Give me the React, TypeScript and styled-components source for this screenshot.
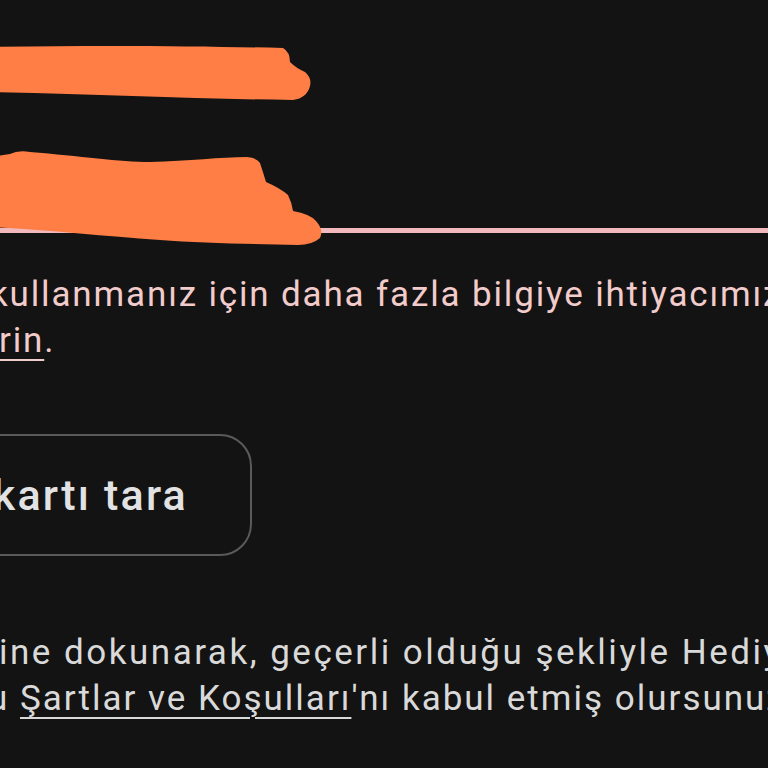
import React from "react";
import styled, { createGlobalStyle } from "styled-components";

const Global = createGlobalStyle`
  html, body {
    margin: 0;
    padding: 0;
    background: #131313;
  }
  body {
    font-family: Roboto, "Noto Sans", Arial, sans-serif;
    overflow: hidden;
  }
`;

const Page = styled.div`
  position: relative;
  width: 768px;
  height: 768px;
  overflow: hidden;
  background: #131313;
  display: flex;
  flex-direction: column;
`;

const Header = styled.div`
  height: 228px;
  flex: none;
`;

const Divider = styled.div`
  height: 5px;
  background: #f1b9be;
  flex: none;
`;

const Scribbles = styled.svg`
  position: absolute;
  top: 0;
  left: 0;
  width: 768px;
  height: 260px;
  pointer-events: none;
`;

const Paragraph = styled.p<{ $color: string; $top: number }>`
  margin: ${(p) => p.$top}px 0 0 0;
  font-size: 35px;
  line-height: 46px;
  color: ${(p) => p.$color};
  white-space: nowrap;
`;

const Line = styled.span<{ $shift: number; $spacing: number }>`
  display: block;
  margin-left: ${(p) => p.$shift}px;
  letter-spacing: ${(p) => p.$spacing}px;
`;

const Link = styled.span`
  text-decoration: underline;
  text-decoration-thickness: 2px;
  text-underline-offset: 7px;
`;

const ButtonRow = styled.div`
  margin-top: 70px;
  margin-left: -60px;
  display: flex;
`;

const OutlineButton = styled.button`
  box-sizing: border-box;
  width: 312px;
  height: 122px;
  border: 2px solid #5a5a5a;
  border-radius: 32px;
  background: transparent;
  color: #e2e2e2;
  font-family: Roboto, "Noto Sans", Arial, sans-serif;
  font-size: 43px;
  font-weight: 500;
  letter-spacing: 2.2px;
  display: flex;
  align-items: center;
  justify-content: flex-end;
  padding: 0 62px 0 0;
  white-space: nowrap;
`;

export default function App() {
  return (
    <>
      <Global />
      <Page>
        <Header />
        <Divider />
        <Scribbles viewBox="0 0 768 260">
          <path
            fill="#fe7e45"
            d="M -10 47 C 100 45, 200 46, 283 48 Q 290 52 290 62 Q 296 68 305 72 Q 312 78 310 86 Q 307 98 293 100 C 200 99, 100 94, -10 92 Z"
          />
          <path
            fill="#fe7e45"
            d="M -10 157 L 10 154 Q 18 150 30 152 C 80 156, 120 162, 150 162 C 190 161, 220 157, 247 157 Q 257 158 260 163 Q 263 172 266 182 Q 280 188 288 195 Q 292 203 293 211 Q 310 214 316 221 Q 324 230 320 238 Q 312 245 298 245 C 250 244, 200 243, 160 240 C 100 236, 50 230, -10 227 Z"
          />
        </Scribbles>
        <Paragraph $color="#f2cbcb" $top={39}>
          <Line $shift={-10} $spacing={1.85}>
            kullanmanız için daha fazla bilgiye ihtiyacımız
          </Line>
          <Line $shift={-1} $spacing={1.85}>
            <Link>rin</Link>.
          </Line>
        </Paragraph>
        <ButtonRow>
          <OutlineButton>kartı tara</OutlineButton>
        </ButtonRow>
        <Paragraph $color="#d9d9d9" $top={74}>
          <Line $shift={-1} $spacing={2.5}>
            ine dokunarak, geçerli olduğu şekliyle Hediye
          </Line>
          <Line $shift={-12} $spacing={2}>
            u <Link>Şartlar ve Koşulları</Link>'nı kabul etmiş olursunuz.
          </Line>
        </Paragraph>
      </Page>
    </>
  );
}
